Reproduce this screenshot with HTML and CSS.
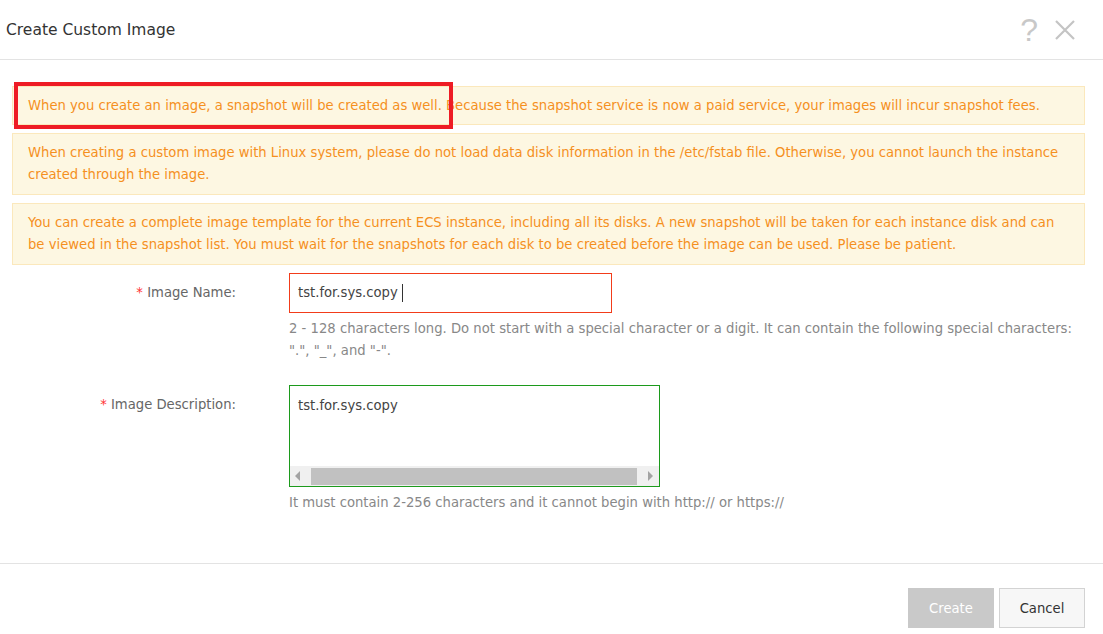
FILE: index.html
```html
<!DOCTYPE html>
<html lang="en">
<head>
    <meta charset="UTF-8">
    <title>Create Custom Image</title>
    <link rel="stylesheet" href="styles.css">
</head>
<body>
    <div class="dialog">
        <div class="dialog-header">
            <h2>Create Custom Image</h2>
            <div class="header-actions">
                <span class="help">?</span>
                <svg class="close" width="22" height="22" viewBox="0 0 22 22">
                    <path d="M2 2 L20 20 M20 2 L2 20" stroke="#c4c4c4" stroke-width="2.2" fill="none"/>
                </svg>
            </div>
        </div>

        <div class="dialog-body">
            <div class="alert first">
                When you create an image, a snapshot will be created as well. Because the snapshot service is now a paid service, your images will incur snapshot fees.
                <span class="highlight"></span>
            </div>
            <div class="alert">
                When creating a custom image with Linux system, please do not load data disk information in the /etc/fstab file. Otherwise, you cannot launch the instance created through the image.
            </div>
            <div class="alert">
                You can create a complete image template for the current ECS instance, including all its disks. A new snapshot will be taken for each instance disk and can be viewed in the snapshot list. You must wait for the snapshots for each disk to be created before the image can be used. Please be patient.
            </div>

            <div class="form-row">
                <label class="form-label"><span class="req">*</span> Image Name:</label>
                <div class="form-field">
                    <div class="input error">tst.for.sys.copy<span class="caret"></span></div>
                    <p class="help-text">2 - 128 characters long. Do not start with a special character or a digit. It can contain the following special characters: ".", "_", and "-".</p>
                </div>
            </div>

            <div class="form-row desc">
                <label class="form-label"><span class="req">*</span> Image Description:</label>
                <div class="form-field">
                    <div class="textarea">
                        <div class="textarea-content">tst.for.sys.copy</div>
                        <div class="hscroll">
                            <span class="arrow left"></span>
                            <span class="thumb"></span>
                            <span class="arrow right"></span>
                        </div>
                    </div>
                    <p class="help-text">It must contain 2-256 characters and it cannot begin with http:// or https://</p>
                </div>
            </div>
        </div>

        <div class="dialog-footer">
            <button class="btn btn-primary" disabled>Create</button>
            <button class="btn">Cancel</button>
        </div>
    </div>
</body>
</html>
```

FILE: styles.css
```css
body {
    margin: 0;
    font-family: Tahoma, "DejaVu Sans", "Liberation Sans", sans-serif;
    background: #fff;
    color: #333;
}

.dialog {
    width: 1103px;
    height: 634px;
    display: flex;
    flex-direction: column;
}

.dialog-header {
    height: 60px;
    border-bottom: 1px solid #e3e3e3;
    display: flex;
    align-items: center;
    justify-content: space-between;
    padding: 0 27px 0 6px;
    box-sizing: border-box;
}

.dialog-header h2 {
    margin: 0;
    font-size: 15.5px;
    font-weight: normal;
    color: #333;
    padding-top: 1px;
}

.header-actions {
    display: flex;
    align-items: center;
    gap: 16px;
}

.help {
    font-family: "Liberation Sans", sans-serif;
    font-size: 32px;
    color: #c8c8c8;
    line-height: 1;
}

.dialog-body {
    flex: 1;
    padding: 26px 18px 0 12px;
}

.alert {
    position: relative;
    background: #fdf7e2;
    border: 1px solid #fbe8bc;
    color: #f5901e;
    font-size: 13.2px;
    line-height: 22px;
    padding: 8px 15px;
    margin-bottom: 8px;
}

.alert.first {
    padding: 8px 15px 7px;
}

.highlight {
    position: absolute;
    left: 1px;
    top: -5px;
    width: 431px;
    height: 39px;
    border: 4px solid #ee1c25;
}

.form-row {
    display: flex;
    margin-top: 8px;
}

.form-label {
    width: 224px;
    text-align: right;
    font-size: 13.2px;
    color: #666;
    padding-top: 12px;
    box-sizing: border-box;
}

.req {
    color: #f33;
}

.form-field {
    margin-left: 53px;
    flex: 1;
}

.input {
    width: 323px;
    height: 40px;
    box-sizing: border-box;
    border: 1px solid #f23c1a;
    font-size: 13.2px;
    color: #444;
    padding: 10px 8px;
    line-height: 18px;
}

.caret {
    display: inline-block;
    width: 1px;
    height: 18px;
    background: #333;
    margin-left: 4px;
    vertical-align: top;
}

.help-text {
    margin: 5px 0 0;
    font-size: 13.2px;
    line-height: 22px;
    color: #888;
}

.form-row.desc {
    margin-top: 23px;
}

.textarea {
    width: 371px;
    height: 102px;
    box-sizing: border-box;
    border: 1px solid #1c9a1c;
    display: flex;
    flex-direction: column;
}

.textarea-content {
    flex: 1;
    font-size: 13.2px;
    color: #444;
    padding: 11px 8px 9px;
    line-height: 18px;
}

.hscroll {
    height: 20px;
    background: #f0f0f0;
    display: flex;
    align-items: center;
    padding: 0 6px 0 5px;
    gap: 11px;
}

.thumb {
    flex: 1;
    height: 17px;
    background: #c1c1c1;
}

.arrow {
    width: 0;
    height: 0;
    border-top: 5px solid transparent;
    border-bottom: 5px solid transparent;
}

.arrow.left {
    border-right: 5px solid #a3a3a3;
}

.arrow.right {
    border-left: 5px solid #a3a3a3;
}

.dialog-footer {
    height: 71px;
    border-top: 1px solid #e3e3e3;
    display: flex;
    justify-content: flex-end;
    align-items: flex-start;
    gap: 5px;
    padding: 24px 18px 0 0;
    box-sizing: border-box;
}

.btn {
    width: 86px;
    height: 40px;
    font-family: inherit;
    font-size: 13.2px;
    color: #333;
    background: #f7f7f7;
    border: 1px solid #d3d3d3;
}

.btn-primary {
    background: #c9c9c9;
    border-color: #c9c9c9;
    color: #fff;
}
```
